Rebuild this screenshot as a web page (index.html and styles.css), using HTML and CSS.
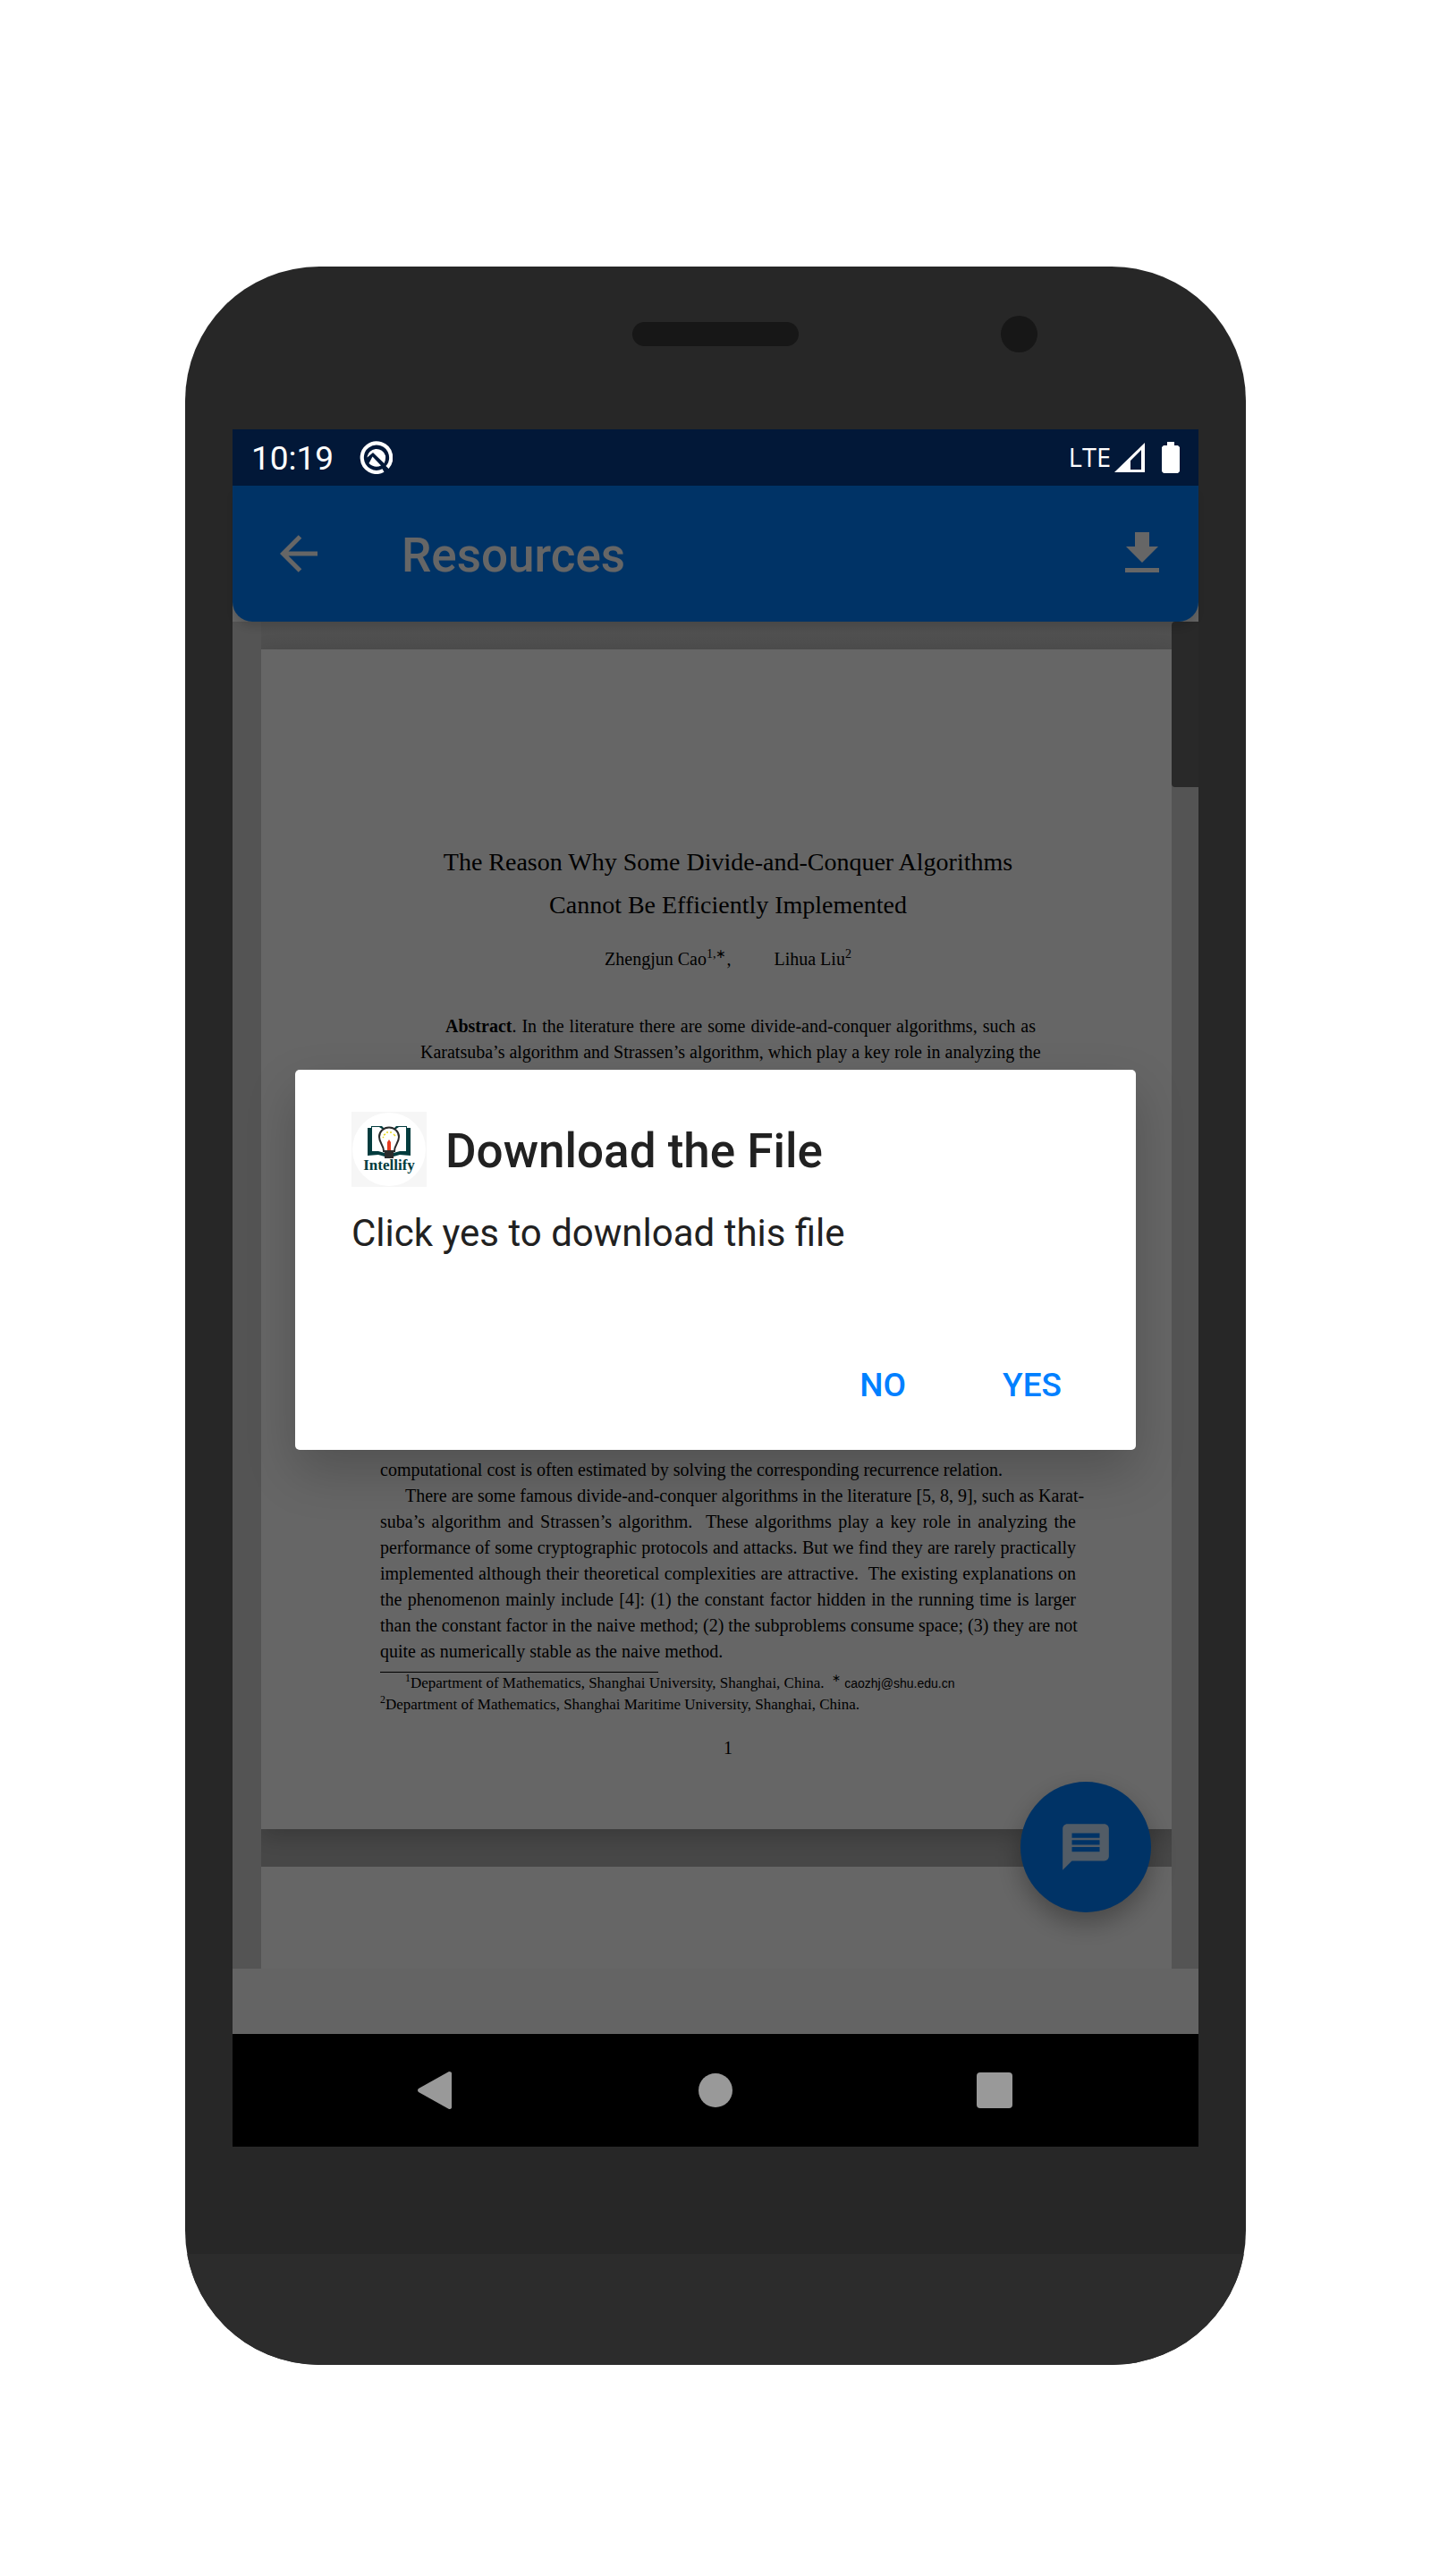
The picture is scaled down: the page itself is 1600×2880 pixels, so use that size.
FILE: index.html
```html
<!DOCTYPE html>
<html lang="en">
<head>
<meta charset="utf-8">
<meta name="viewport" content="width=device-width, initial-scale=1">
<title>Resources</title>
<link rel="stylesheet" href="styles.css">
</head>
<body>
<main class="stage">
  <div class="phone">
    <div class="phone-top">
      <span class="speaker"></span>
      <span class="camera"></span>
    </div>
    <div class="screen">
      <div class="status-bar">
        <span class="clock">10:19</span>
        <svg class="status-badge" viewBox="0 0 37 37" aria-hidden="true">
          <path d="M31 29.500A16.200 16.200 0 1 0 26.500 33" fill="none" stroke="#fff" stroke-width="4.200"/>
          <path d="M8.500 18.500A10.500 10.500 0 0 1 29 16.500Q29.500 21 27.500 25L15 13Z" fill="#fff"/>
          <path d="M14.500 17.500L24 27.500Q17 31 10.500 25Z" fill="#fff"/>
        </svg>
        <span class="network">LTE</span>
        <svg class="signal" viewBox="0 0 34 33" aria-hidden="true"><path fill="#fff" fill-rule="evenodd" d="M0 33L34 0V33ZM18 20V30H30V8Z"/></svg>
        <svg class="battery" viewBox="0 0 20 35" aria-hidden="true"><path fill="#fff" d="M6 0H14V4H18L20 6V33L18 35H2L0 33V6L2 4H6Z"/></svg>
      </div>
      <div class="app">
        <header class="app-bar">
          <button class="icon-button" type="button" aria-label="Back">
            <svg class="back-icon" viewBox="0 0 42 42" aria-hidden="true"><path d="M22.500 2L3.500 21L22.500 40M3.500 21H42" fill="none" stroke="#fff" stroke-width="5"/></svg>
          </button>
          <h1 class="app-title">Resources</h1>
          <button class="icon-button" type="button" aria-label="Download">
            <svg class="download-icon" viewBox="0 0 38 45" aria-hidden="true"><path fill="#fff" d="M11 0H27V16H37L19 34L1 16H11ZM0 40H38V45H0Z"/></svg>
          </button>
        </header>
        <div class="reader">
          <div class="pages">
            <article class="sheet">
              <h2 class="paper-title">The Reason Why Some Divide-and-Conquer Algorithms<br>Cannot Be Efficiently Implemented</h2>
              <p class="authors"><span>Zhengjun Cao<sup>1,∗</sup>,</span><span>Lihua Liu<sup>2</sup></span></p>
              <div class="abstract">
                <p class="line indent"><b>Abstract</b>. In the literature there are some divide-and-conquer algorithms, such as</p>
                <p class="line">Karatsuba’s algorithm and Strassen’s algorithm, which play a key role in analyzing the</p>
              </div>
              <div class="body-text">
                <p class="last">computational cost is often estimated by solving the corresponding recurrence relation.</p>
                <p class="line indent">There are some famous divide-and-conquer algorithms in the literature [5, 8, 9], such as Karat-</p>
                <p class="line">suba’s algorithm and Strassen’s algorithm.&nbsp; These algorithms play a key role in analyzing the</p>
                <p class="line">performance of some cryptographic protocols and attacks. But we find they are rarely practically</p>
                <p class="line">implemented although their theoretical complexities are attractive.&nbsp; The existing explanations on</p>
                <p class="line">the phenomenon mainly include [4]: (1) the constant factor hidden in the running time is larger</p>
                <p class="line">than the constant factor in the naive method; (2) the subproblems consume space; (3) they are not</p>
                <p class="last">quite as numerically stable as the naive method.</p>
              </div>
              <div class="footnotes">
                <p class="indent"><sup>1</sup>Department of Mathematics, Shanghai University, Shanghai, China.&nbsp; <sup>∗</sup> <span class="email">caozhj@shu.edu.cn</span></p>
                <p><sup>2</sup>Department of Mathematics, Shanghai Maritime University, Shanghai, China.</p>
              </div>
              <p class="folio">1</p>
            </article>
            <div class="sheet-next"></div>
          </div>
          <div class="track"><div class="thumb"></div></div>
        </div>
        <div class="footer-strip"></div>
        <button class="fab" type="button" aria-label="Chat">
          <svg viewBox="0 0 24 24" aria-hidden="true"><path fill="#fff" fill-opacity="0.8" d="M20 2H4c-1.100 0-1.990.9-1.990 2L2 22l4-4h14c1.100 0 2-.9 2-2V4c0-1.100-.9-2-2-2zm-2 12H6v-2h12v2zm0-3H6V9h12v2zm0-3H6V6h12v2z"/></svg>
        </button>
        <div class="scrim">
          <section class="dialog" role="dialog" aria-labelledby="dialog-title">
            <div class="dialog-head">
              <svg class="logo" viewBox="0 0 84 84" role="img" aria-label="Intellify">
                <rect width="84" height="84" fill="#f6f6f6"/>
                <circle cx="42" cy="42" r="41" fill="#fff"/>
                <path fill="#033c3e" d="M18 18H22V16H34L38 20L34 19L31 17H23V44H30L37 46V50L30 48L18 49ZM66 18H62V16H50L46 20L50 19L53 17H61V44H54L47 46V50L54 48L66 49Z"/>
                <path d="M36 44C36 37 31 35 31 28A11 10.500 0 0 1 53 28C53 35 48 37 48 44Z" fill="#fff" stroke="#2b2b2b" stroke-width="2"/>
                <path fill="#2b2b2b" d="M35 43H49L47 46V52H37V46Z"/>
                <path fill="#e63a1e" d="M40 34L42 31L44 34V43H40Z"/>
                <path d="M36 26L38 25M40 24V22M44 24V22M47 25L49 27M35 29L36 28" stroke="#e8d820" stroke-width="1.500"/>
                <text x="42" y="65" text-anchor="middle" class="logo-text">Intellify</text>
              </svg>
              <h2 class="dialog-title" id="dialog-title">Download the File</h2>
            </div>
            <p class="dialog-message">Click yes to download this file</p>
            <div class="dialog-actions">
              <button type="button">NO</button>
              <button type="button">YES</button>
            </div>
          </section>
        </div>
      </div>
      <nav class="nav-bar">
        <button type="button" aria-label="Back"><svg viewBox="0 0 42 42" aria-hidden="true"><path fill="#999" d="M1 19L35 0Q38 0 38 2V40Q38 42 35 42L1 23Q-1 21 1 19Z"/></svg></button>
        <button type="button" aria-label="Home"><svg viewBox="0 0 42 42" aria-hidden="true"><circle cx="21" cy="21" r="19" fill="#999"/></svg></button>
        <button type="button" aria-label="Recent apps"><svg viewBox="0 0 42 42" aria-hidden="true"><rect x="1" y="1" width="40" height="40" rx="4" fill="#999"/></svg></button>
      </nav>
    </div>
    <div class="phone-chin"></div>
  </div>
</main>
</body>
</html>
```
FILE: styles.css
```css
* {
  box-sizing: border-box;
}

body {
  margin: 0;
  background: #fff;
  font-family: Roboto, sans-serif;
}

h1, h2, p {
  margin: 0;
  font-weight: normal;
}

button {
  border: 0;
  padding: 0;
  background: none;
  font: inherit;
  color: inherit;
}

svg {
  display: block;
}

.stage {
  padding: 298px 207px 236px;
}

/* Device shell */
.phone {
  overflow: hidden;
  border-radius: 150px;
  background: #272727;
}

.phone-top {
  display: grid;
  grid-template-columns: 1fr 186px 1fr;
  align-items: center;
  height: 182px;
  padding-bottom: 32px;
}

.speaker {
  grid-column: 2;
  height: 27px;
  border-radius: 14px;
  background: #171717;
}

.camera {
  justify-self: end;
  width: 41px;
  height: 41px;
  margin-right: 233px;
  border-radius: 50%;
  background: #171717;
}

.phone-chin {
  height: 124px;
  margin-top: 120px;
  background: #2c2c2c;
}

.screen {
  margin: 0 53px;
}

.status-bar {
  display: flex;
  align-items: center;
  height: 63px;
  padding: 0 21px;
  background: #021838;
  color: #fff;
}

.clock {
  padding-top: 3px;
  font-size: 37px;
  line-height: 60px;
}

.status-badge {
  width: 37px;
  height: 37px;
  margin-left: 29px;
}

.network {
  margin-left: auto;
  padding-bottom: 2px;
  font-family: "Open Sans", sans-serif;
  font-size: 29px;
  line-height: 40px;
}

.signal {
  width: 34px;
  height: 33px;
  margin-left: 4px;
}

.battery {
  width: 20px;
  height: 35px;
  margin-left: 19px;
}

/* Application */
.app {
  position: relative;
  background: #fafafa;
}

.app-bar {
  position: relative;
  display: flex;
  align-items: center;
  height: 152px;
  padding: 0 44px 0 53px;
  border-radius: 0 0 22px 22px;
  background: #0080ff;
  color: #fff;
  box-shadow: 0 8px 10px -2px rgba(0, 0, 0, 0.12);
}

.back-icon {
  width: 42px;
  height: 42px;
}

.download-icon {
  width: 38px;
  height: 45px;
  margin-bottom: 3px;
}

.app-title {
  flex: 1;
  margin-left: 94px;
  padding-top: 4px;
  font-size: 53px;
  font-weight: 500;
  line-height: 60px;
}

.reader {
  display: flex;
  padding-left: 32px;
  background: #d1d1d1;
}

.pages {
  flex: 1;
  min-width: 0;
  overflow: hidden;
  padding-top: 31px;
  background: linear-gradient(#cacaca, #c4c4c4 31px, #b2b2b2 1350px);
}

.sheet {
  height: 1319px;
  padding: 214px 107px 0 133px;
  background: #fff;
  box-shadow: 0 8px 24px rgba(0, 0, 0, 0.2);
  color: #000;
  font-family: "Liberation Serif", serif;
  font-size: 20px;
  line-height: 29px;
}

.sheet sup {
  font-size: 70%;
  line-height: 0;
}

.sheet-next {
  height: 114px;
  margin-top: 42px;
  background: #fff;
}

.paper-title {
  font-size: 28px;
  line-height: 48px;
  text-align: center;
}

.authors {
  display: flex;
  justify-content: center;
  gap: 48px;
  margin-top: 21px;
  line-height: 30px;
}

.abstract {
  margin: 46px 45px 0;
}

.line {
  text-align: justify;
  text-align-last: justify;
  white-space: nowrap;
}

.indent {
  padding-left: 28px;
}

.body-text {
  margin-top: 438px;
}

.footnotes {
  margin-top: 8px;
  font-size: 17px;
  line-height: 24px;
}

.footnotes::before {
  content: "";
  display: block;
  width: 40%;
  height: 1px;
  background: #000;
}

.email {
  font-family: "Liberation Sans", sans-serif;
  font-size: 14px;
}

.folio {
  margin-top: 22px;
  text-align: center;
}

.track {
  flex: none;
  width: 30px;
}

.thumb {
  height: 185px;
  border-radius: 4px 0 0 4px;
  background: #666;
}

.footer-strip {
  height: 73px;
}

.fab {
  position: absolute;
  right: 53px;
  bottom: 136px;
  display: grid;
  place-items: center;
  width: 146px;
  height: 146px;
  border-radius: 50%;
  background: #0080ff;
  box-shadow: 0 12px 28px rgba(0, 0, 0, 0.3);
}

.fab svg {
  width: 62px;
  height: 62px;
}

/* Dialog */
.scrim {
  position: absolute;
  inset: 0;
  padding: 653px 70px 0;
  background: rgba(0, 0, 0, 0.6);
}

.dialog {
  height: 425px;
  padding: 47px 63px 0;
  border-radius: 5px;
  background: #fff;
  color: #212121;
  box-shadow: 0 24px 56px rgba(0, 0, 0, 0.2);
}

.dialog-head {
  display: flex;
  align-items: center;
  gap: 21px;
}

.logo {
  width: 84px;
  height: 84px;
}

.logo-text {
  fill: #033c3e;
  font-family: "Liberation Serif", serif;
  font-size: 17px;
  font-weight: bold;
}

.dialog-title {
  padding-top: 4px;
  font-size: 53px;
  font-weight: 500;
  line-height: 60px;
}

.dialog-message {
  margin-top: 27px;
  font-size: 42px;
  line-height: 50px;
}

.dialog-actions {
  display: flex;
  justify-content: flex-end;
  gap: 108px;
  margin-top: 92px;
  padding-right: 20px;
}

.dialog-actions button {
  padding: 20px 0;
  color: #0080ff;
  font-size: 37px;
  font-weight: 500;
  line-height: 66px;
}

.nav-bar {
  display: flex;
  justify-content: center;
  height: 126px;
  background: #000;
}

.nav-bar button {
  display: grid;
  place-items: center;
  width: 312px;
}

.nav-bar svg {
  width: 42px;
  height: 42px;
}
```
